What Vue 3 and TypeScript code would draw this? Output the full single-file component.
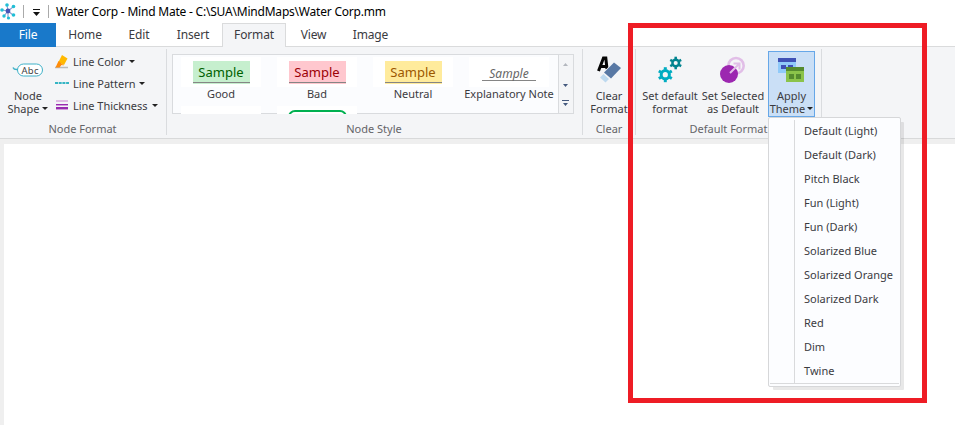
<script setup lang="ts">
interface Tab { label: string; width: number; kind?: 'file' | 'active' }
interface Sample { label: string; kind: string }

const tabs: Tab[] = [
  { label: 'File', width: 56, kind: 'file' },
  { label: 'Home', width: 58 },
  { label: 'Edit', width: 50 },
  { label: 'Insert', width: 58 },
  { label: 'Format', width: 64, kind: 'active' },
  { label: 'View', width: 55 },
  { label: 'Image', width: 59 },
]

const samples: Sample[] = [
  { label: 'Good', kind: 'good' },
  { label: 'Bad', kind: 'bad' },
  { label: 'Neutral', kind: 'neutral' },
  { label: 'Explanatory Note', kind: 'note' },
]

const themes: string[] = [
  'Default (Light)', 'Default (Dark)', 'Pitch Black', 'Fun (Light)', 'Fun (Dark)',
  'Solarized Blue', 'Solarized Orange', 'Solarized Dark', 'Red', 'Dim', 'Twine',
]
const gearAngles: number[] = [0, 60, 120, 180, 240, 300]
</script>

<template>
  <div class="window">
    <header class="titlebar">
      <svg class="logo" width="16" height="18" viewBox="0 0 16 18">
        <path d="M8 9 2 8M8 9 7 3M8 9l5-4M8 9l-4 5M8 9v7M8 9l5 4" stroke="#8ea0d4" stroke-width="1.2" />
        <g fill="#20bfd6"><circle cx="2" cy="8" r="1.8" /><circle cx="7" cy="3" r="1.8" /><circle cx="13.500" cy="4.500" r="1.8" /><circle cx="4" cy="14" r="1.7" /><circle cx="8.500" cy="16" r="1.6" /><circle cx="13.500" cy="13" r="1.8" /></g>
        <circle cx="8" cy="9" r="2.4" fill="#4654b5" />
      </svg>
      <i class="bar"></i>
      <svg class="quick" width="8" height="8" viewBox="0 0 8 8"><path d="M1 0h7v1H1zM1 3h7L4.500 7z" fill="#111" /></svg>
      <i class="bar"></i>
      <span class="title">Water Corp - Mind Mate - C:\SUA\MindMaps\Water Corp.mm</span>
    </header>

    <nav class="tabs">
      <div v-for="tab in tabs" :key="tab.label" class="tab" :class="tab.kind" :style="{ width: tab.width + 'px' }">{{ tab.label }}</div>
      <div class="tabs-rest"></div>
    </nav>

    <section class="ribbon">
      <div class="group node-format">
        <div class="body">
          <div class="big node-shape">
            <svg width="32" height="34" viewBox="0 0 32 34">
              <path d="M1 16.500q1 2.500 5 2" fill="none" stroke="#3fb1c8" stroke-width="1.500" />
              <rect x="5.500" y="13" width="25" height="12" rx="6" fill="#fff" stroke="#3fb1c8" />
              <text x="9.500" y="22.500" font-size="9.500" textLength="17" fill="#444">Abc</text>
            </svg>
            <span>Node</span><span>Shape<b class="arrow"></b></span>
          </div>
          <div class="lines">
            <div>
              <svg width="14" height="16" viewBox="0 0 14 16"><path d="M0 14.500h13" stroke="#bbb" stroke-width="1.500" /><path d="m7 2 5.500 3.500L9 12 3.500 9z" fill="#ffb900" /><path d="M3.500 8 .500 14.500h4L6.500 12l2.500.500z" fill="#ff8c0a" /></svg>
              <span>Line Color</span><b class="arrow"></b>
            </div>
            <div>
              <svg width="14" height="16" viewBox="0 0 14 16"><path d="M0 8h14" stroke="#35b5c4" stroke-width="2" stroke-dasharray="3 .7" /></svg>
              <span>Line Pattern</span><b class="arrow"></b>
            </div>
            <div class="thick">
              <svg width="14" height="16" viewBox="0 0 14 16"><path d="M1 3h12v2H1z" fill="#dfbbe4" /><path d="M1 7h12v1H1zM1 10h12v2H1z" fill="#982ab0" /><path d="M1 8h12v1H1zM1 12h12v1H1z" fill="#d09cda" /></svg>
              <span>Line Thickness</span><b class="arrow"></b>
            </div>
          </div>
        </div>
        <div class="caption">Node Format</div>
      </div>

      <div class="group node-style">
        <div class="gallery">
          <div class="items">
            <div v-for="s in samples" :key="s.label" class="item">
              <div class="thumb" :class="s.kind"><span>Sample</span></div>
              <div class="item-label">{{ s.label }}</div>
            </div>
            <div class="next"></div>
            <div class="next"><div class="outline"></div></div>
          </div>
          <div class="scroller">
            <svg width="13" height="58" viewBox="0 0 13 58"><path d="m4 11 2.500-3L9 11z" fill="#b3b7be" /><path d="M4 29h5l-2.500 3z" fill="#44597e" /><path d="M3 45h7v1H3zM4 48h5l-2.500 3z" fill="#44597e" /></svg>
          </div>
        </div>
        <div class="caption">Node Style</div>
      </div>

      <div class="group clear">
        <div class="body">
          <div class="big">
            <svg width="32" height="34" viewBox="0 0 32 34">
              <path d="M5.500 20 10.500 7h2.300L14 18M8 15.500h6" fill="none" stroke="#050505" stroke-width="3" />
              <path d="m21.500 10.500 7.500 6-12 13-8-7.500z" fill="#f4f5f7" />
              <path d="m21 11.500 7 5.500-10 10.500-7-6z" fill="#5878a4" /><path d="m10.500 23 5.500 5-3.500 3.500L7 26.500z" fill="#bdd9ef" />
            </svg>
            <span>Clear</span><span>Format</span>
          </div>
        </div>
        <div class="caption">Clear</div>
      </div>

      <div class="group default-format">
        <div class="body">
          <div class="big set-default">
            <svg width="32" height="34" viewBox="0 0 32 34">
              <g fill="none" stroke="#00acc1" transform="translate(11.300 23.700)"><circle r="4.100" stroke-width="3" /><path v-for="a in gearAngles" :key="a" d="M0-5V-7.500" stroke-width="3" :transform="`rotate(${a})`" /></g>
              <g fill="none" stroke="#00838f" transform="translate(21.700 12)"><circle r="3.300" stroke-width="2.500" /><path v-for="a in gearAngles" :key="a" d="M0-4V-6.300" stroke-width="2.500" :transform="`rotate(${a})`" /></g>
            </svg>
            <span>Set default</span><span>format</span>
          </div>
          <div class="big set-selected">
            <svg width="32" height="34" viewBox="0 0 32 34">
              <circle cx="19" cy="14.700" r="7.700" fill="none" stroke="#e1bee7" stroke-width="2.600" />
              <circle cx="12" cy="23" r="9" fill="#9c27b0" />
              <path d="m13 22 8.500-8.500M16.500 12.500h6V18.500" fill="none" stroke="#e1bee7" stroke-width="2" />
            </svg>
            <span>Set Selected</span><span>as Default</span>
          </div>
          <div class="big apply">
            <svg width="32" height="34" viewBox="0 0 32 34">
              <path d="M2 7h18v15H2z" fill="#90caf9" /><path d="M2 7h18v4H2zM5 14h5v4H5zM12 14h5v4h-5z" fill="#3f51b5" />
              <path d="M10 16h18v15H10z" fill="#8bc34a" /><path d="M10 16h18v4H10zM13 23h5v5h-5zM20 23h5v5h-5z" fill="#558b2f" />
            </svg>
            <span>Apply</span><span>Theme<b class="arrow"></b></span>
          </div>
        </div>
        <div class="caption">Default Format</div>
      </div>
    </section>

    <main class="workspace"><div class="canvas"></div></main>

    <div class="menu">
      <ul><li v-for="theme in themes" :key="theme">{{ theme }}</li></ul>
    </div>
    <div class="frame"></div>
  </div>
</template>

<style>
body { margin: 0; overflow: hidden; }
</style>

<style scoped>
* { box-sizing: border-box; }
.window { position: relative; width: 955px; height: 425px; background: #fff; display: flex; flex-direction: column; font: 11px/13px "Noto Sans", "Open Sans", sans-serif; color: #3b3b3f; overflow: hidden; }
svg { display: block; flex: none; }
.titlebar { height: 23px; display: flex; align-items: center; }
.logo { margin-top: -1px; }
.bar { width: 1px; height: 13px; background: #aaa; margin-left: 7px; }
.quick { margin: 3px 5px 0 8px; }
.quick + .bar { margin-left: 3px; }
.title { margin: 1px 0 0 7px; color: #000; font-size: 12px; line-height: 16px; white-space: nowrap; letter-spacing: -.21px; }
.tabs { height: 24px; display: flex; flex: none; }
.tab { border-bottom: 1px solid #dadbdc; text-align: center; line-height: 24px; font-size: 12px; letter-spacing: -.15px; }
.tab.file { background: #1979ca; color: #fff; border-bottom: 0; }
.tab.active { background: #f4f5f7; border: 1px solid #dadbdc; border-bottom: 0; line-height: 22px; }
.tabs-rest { flex: 1; border-bottom: 1px solid #dadbdc; }
.ribbon { height: 92px; display: flex; flex: none; background: #f4f5f7; border-bottom: 1px solid #d8d9da; padding-top: 2px; }
.group { height: 86px; border-right: 1px solid #dadcdf; display: flex; flex-direction: column; }
.node-format { width: 167px; }
.node-style { width: 416px; }
.clear { width: 53px; }
.default-format { width: 186px; }
.body { height: 70px; padding-top: 2px; display: flex; }
.caption { text-align: center; color: #646468; height: 16px; line-height: 20px; }
.node-format .caption, .node-style .caption { padding-right: 1px; }
.big { display: flex; flex-direction: column; align-items: center; white-space: nowrap; height: 66px; width: 52px; }
.big svg { margin-bottom: 4px; }
.arrow { display: inline-block; border: 3px solid transparent; border-top-color: #222; border-bottom: 0; margin-left: 3px; vertical-align: 3px; }
.node-shape { width: 56px; }
.node-shape svg text { font-family: "Noto Sans", sans-serif; }
.lines { display: flex; flex-direction: column; margin-top: -1px; }
.lines > div { display: flex; align-items: center; height: 22px; margin-left: -1px; }
.lines span { margin-left: 4px; letter-spacing: -.03px; }
.lines .arrow { margin-left: 4px; }
.gallery { display: flex; width: 402px; height: 60px; margin: 5px 0 5px 5px; flex: none; border: 1px solid #d9dbde; background: #fbfcfe; }
.items { width: 385px; height: 60px; display: grid; grid-template-columns: repeat(4, 96px); grid-template-rows: 49px 11px; overflow: hidden; }
.item { padding-top: 2px; display: flex; flex-direction: column; align-items: center; }
.thumb { width: 80px; height: 30px; background: #fff; display: flex; justify-content: center; padding-top: 4px; flex: none; }
.thumb span { width: 57px; height: 23px; text-align: center; font-size: 13px; line-height: 23px; background: linear-gradient(#858585, #858585) 0 21px / 57px 1px no-repeat; }
.good span { background-color: #c6efce; color: #006100; }
.bad span { background-color: #ffc7ce; color: #9c0006; }
.neutral span { background-color: #ffeb9c; color: #9c5700; }
.thumb.note span { width: 54px; font-size: 12px; font-style: italic; color: #666; background-position: 0 19px; line-height: 25px; }
.item-label { line-height: 14px; white-space: nowrap; }
.next { width: 80px; height: 8px; background: #fff; margin: 2px 0 0 8px; overflow: hidden; }
.outline { margin: 4px 0 0 11px; width: 59px; height: 25px; border: 2px solid #00b050; border-radius: 7px; }
.scroller { width: 15px; border-left: 1px solid #d9dbde; background: #f4f5f7; }
.set-default { width: 68px; }
.set-default svg { margin-left: -1px; }
.set-selected { width: 62px; margin-left: -2px; }
.apply { width: 47px; margin-left: 4px; border: 1px solid #66a7e8; background: #cadff6; }
.apply svg { margin: -1px 0 4px 1px; }
.apply .arrow { margin-left: 2px; }
.workspace { flex: 1; background: #efefef; padding: 5px 0 0 4px; }
.canvas { height: 100%; background: #fff; }
.menu { position: absolute; left: 768px; top: 117px; width: 133px; height: 270px; padding: 2px 1px; border: 1px solid #d6d7d9; border-radius: 2px; background: #fcfdff; box-shadow: 4px 4px 0 -1px rgba(0,0,0,.09); }
.menu ul { list-style: none; margin: 0; padding: 0 0 0 34px; height: 264px; border-bottom: 1px solid #d9dadc; background: linear-gradient(#d9dadc, #d9dadc) 24px 0 / 1px 100% no-repeat; }
.menu li { height: 24px; line-height: 21px; white-space: nowrap; }
.frame { position: absolute; left: 628px; top: 23px; width: 299px; height: 380px; border: 5px solid #ee1c25; }
</style>
